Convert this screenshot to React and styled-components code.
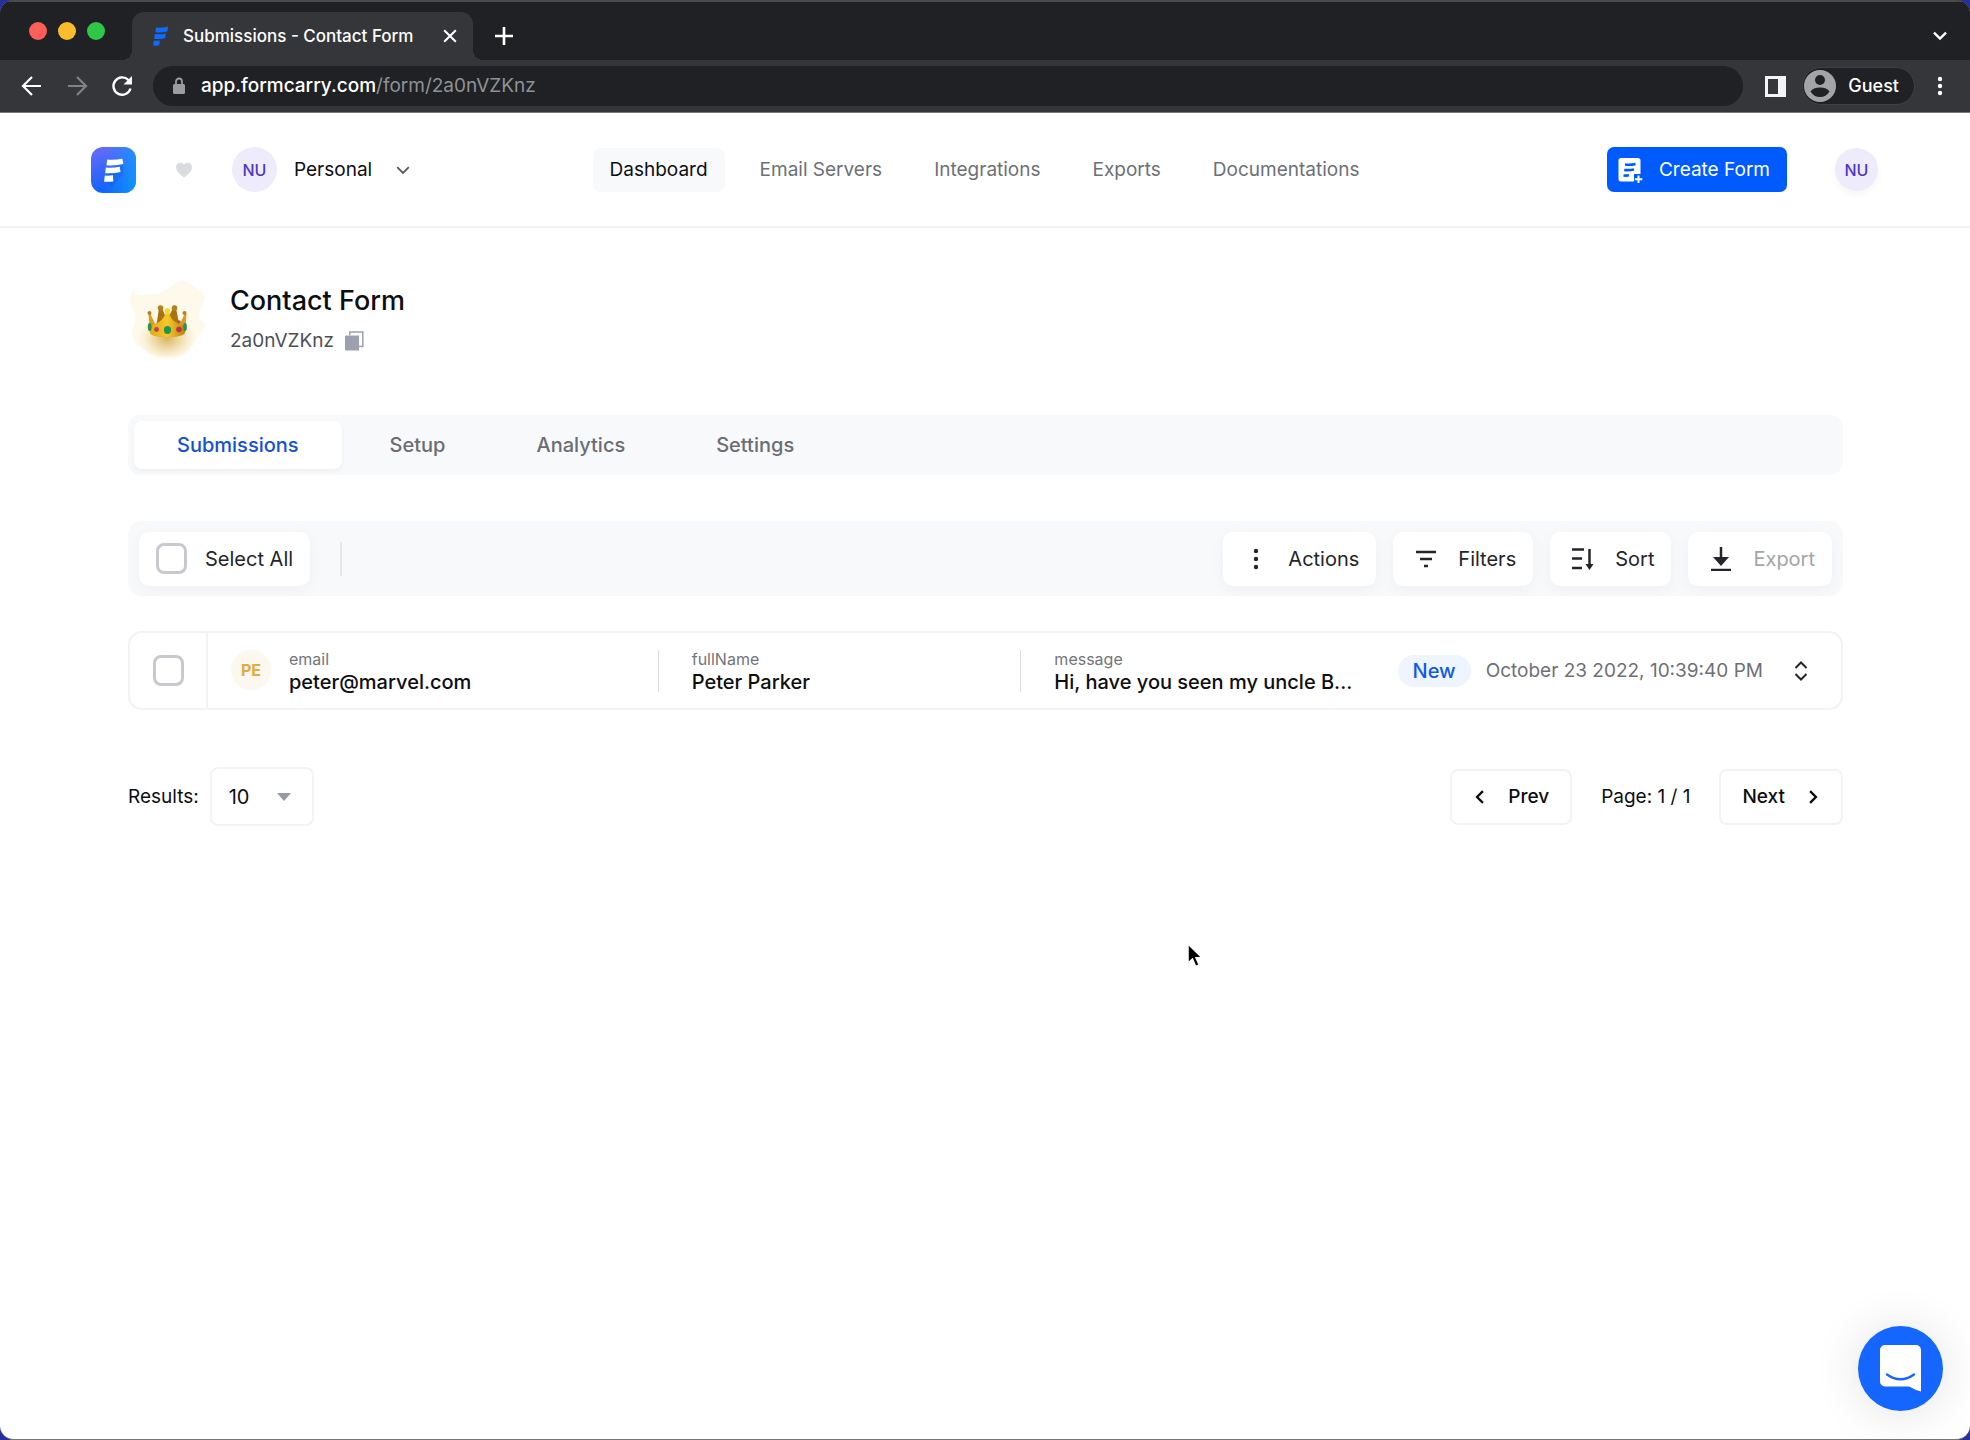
import React from 'react';
import styled, { createGlobalStyle, css } from 'styled-components';

const GlobalStyle = createGlobalStyle`
  * {
    box-sizing: border-box;
  }

  body {
    margin: 0;
    background: #27309a;
    color: #0d0e12;
    font-family: Inter, 'Liberation Sans', sans-serif;
    font-size: 19px;
    line-height: 24px;
  }

  button,
  select,
  input {
    font: inherit;
    color: inherit;
    margin: 0;
  }

  button {
    border: 0;
    padding: 0;
    background: none;
    cursor: pointer;
  }

  a {
    color: inherit;
    text-decoration: none;
  }

  svg {
    display: block;
    flex: none;
  }
`;

const Window = styled.div`
  min-height: 100vh;
  display: flex;
  flex-direction: column;
  overflow: hidden;
  background: #fff;
  border-bottom: 1px solid #777;
  border-radius: 14px;
`;

/* browser frame */

const Frame = styled.header`
  color: #fff;
  background: #35363a;
  border-bottom: 1px solid #77787b;
`;

const TabStrip = styled.div`
  display: flex;
  align-items: flex-end;
  height: 60px;
  padding: 0 22px 0 29px;
  background: #202124;
  border-top: 2px solid #4a4b4f;
`;

const Lights = styled.div`
  display: flex;
  gap: 11px;
  margin-right: 27px;
  padding-bottom: 20px;
`;

const Light = styled.span`
  width: 18px;
  height: 18px;
  border-radius: 50%;
  background: ${({ color }) => color};
`;

const BrowserTab = styled.div`
  position: relative;
  display: flex;
  align-items: center;
  width: 341px;
  height: 48px;
  padding: 0 16px 0 21px;
  background: #35363a;
  border-radius: 12px 12px 0 0;
  font-size: 17px;
  font-weight: 500;

  &::before,
  &::after {
    content: '';
    position: absolute;
    bottom: 0;
    width: 10px;
    height: 10px;
  }

  &::before {
    left: -10px;
    background: radial-gradient(circle at 0 0, transparent 10px, #35363a 10px);
  }

  &::after {
    right: -10px;
    background: radial-gradient(circle at 100% 0, transparent 10px, #35363a 10px);
  }

  span {
    flex: 1;
    margin-left: 14px;
    white-space: nowrap;
  }
`;

const StripButton = styled.button`
  display: flex;
  align-items: center;
  height: 48px;
  margin-left: ${({ $end }) => ($end ? 'auto' : '22px')};
`;

const AddressRow = styled.div`
  display: flex;
  align-items: center;
  height: 52px;
  padding: 0 20px;
`;

const FrameButton = styled.button`
  width: 24px;
  height: 24px;
  margin-right: 21px;
`;

const Address = styled.div`
  flex: 1;
  display: flex;
  align-items: center;
  height: 40px;
  margin: 0 22px 0 -2px;
  padding: 0 20px;
  gap: 16px;
  background: #202124;
  border-radius: 20px;
  color: #8f9296;

  b {
    font-weight: 500;
    color: #fff;
  }
`;

const Guest = styled.button`
  display: flex;
  align-items: center;
  height: 38px;
  margin: 0 15px 0 16px;
  padding: 0 15px 0 1px;
  gap: 12px;
  background: #202124;
  border: 1px solid #3f4044;
  border-radius: 19px;
  font-size: 18px;
  font-weight: 500;
`;

/* app header */

const Header = styled.header`
  display: grid;
  grid-template-columns: 1fr auto 1fr;
  align-items: center;
  height: 115px;
  padding: 0 92px 0 91px;
  border-bottom: 2px solid #f2f3f5;
`;

const HeaderSide = styled.div`
  display: flex;
  align-items: center;
  gap: ${({ $end }) => ($end ? '48px' : '40px')};
  justify-content: ${({ $end }) => ($end ? 'flex-end' : 'flex-start')};
`;

const Initials = styled.span`
  display: flex;
  align-items: center;
  justify-content: center;
  width: ${({ size }) => size}px;
  height: ${({ size }) => size}px;
  border-radius: 50%;
  background: ${({ $gold }) => ($gold ? '#fdf8ef' : '#eeebfb')};
  color: ${({ $gold }) => ($gold ? '#dfac41' : '#4d36c7')};
  font-size: 16px;
  font-weight: ${({ $gold }) => ($gold ? 700 : 500)};
`;

const Workspace = styled.button`
  display: flex;
  align-items: center;
  gap: 17px;

  svg {
    margin-left: 7px;
  }
`;

const Account = styled.button`
  border-radius: 50%;
  box-shadow: 0 4px 8px rgba(20, 20, 60, 0.04);
`;

const Nav = styled.nav`
  display: flex;
  gap: 18px;
`;

const NavLink = styled.a`
  padding: 10px 17px;
  border-radius: 8px;
  color: #6d7078;

  ${({ $active }) =>
    $active &&
    css`
      color: #0d0e12;
      background: #f8f9fb;
    `}
`;

const CreateButton = styled.button`
  display: flex;
  align-items: center;
  height: 45px;
  padding: 0 17px 0 11px;
  gap: 16px;
  border-radius: 7px;
  background: #005bff;
  color: #fff;
`;

/* form page */

const Main = styled.main`
  padding: 52px 127px 52px 128px;
`;

const FormHead = styled.section`
  display: flex;
  gap: 22px;
  margin-bottom: 55px;

  h1 {
    margin: 0 0 7px;
    font-size: 27px;
    font-weight: 500;
    line-height: 42px;
  }
`;

const FormId = styled.div`
  display: flex;
  align-items: center;
  gap: 11px;
  color: #4d4f56;
`;

const Tabs = styled.nav`
  display: flex;
  gap: 5px;
  margin-bottom: 46px;
  padding: 6px;
  background: #f8f9fb;
  border-radius: 12px;
  font-size: 20px;
  font-weight: 500;
`;

const Tab = styled.a`
  padding: 12px 43px;
  border-radius: 8px;
  color: #6b6d74;

  ${({ $active }) =>
    $active &&
    css`
      color: #1651d0;
      background: #fff;
      box-shadow: 0 2px 4px rgba(20, 20, 40, 0.05);
    `}
`;

const Toolbar = styled.div`
  display: flex;
  align-items: center;
  gap: 17px;
  height: 75px;
  margin-bottom: 35px;
  padding: 0 11px;
  background: #f8f9fb;
  border-radius: 14px;
  font-size: 20px;
`;

const raised = css`
  display: flex;
  align-items: center;
  height: 54px;
  background: #fff;
  border-radius: 10px;
  box-shadow: 0 4px 16px rgba(20, 20, 40, 0.04);
  color: #24252b;
`;

const SelectAll = styled.label`
  ${raised}
  gap: 18px;
  padding: 0 17px;
`;

const Divider = styled.span`
  width: 2px;
  height: 34px;
  margin: 0 auto 0 13px;
  background: #e6e7ea;
`;

const ToolButton = styled.button`
  ${raised}
  gap: 20px;
  padding: 0 17px 0 21px;

  &:disabled span {
    color: #a3a5aa;
  }
`;

const Checkbox = styled.input.attrs({ type: 'checkbox' })`
  appearance: none;
  width: 31px;
  height: 31px;
  border: 3px solid #c7c9ce;
  border-radius: 8px;
  background: #fff;

  &:checked {
    background: #005bff;
  }
`;

const Submission = styled.article`
  display: grid;
  grid-template-columns: 78px 31fr 25fr 26fr auto;
  align-items: center;
  height: 79px;
  margin-bottom: 57px;
  border: 2px solid #f2f3f4;
  border-radius: 14px;
`;

const CheckCell = styled.div`
  display: flex;
  align-items: center;
  justify-content: center;
  height: 100%;
  border-right: 2px solid #f2f3f4;
`;

const Field = styled.div`
  display: flex;
  align-items: center;
  gap: 18px;
  min-width: 0;
  height: 42px;
  padding-left: ${({ $first }) => ($first ? '23px' : '33px')};
  border-left: ${({ $first }) => ($first ? 'none' : '1px solid #dcdde0')};

  ${Initials} {
    align-self: flex-start;
  }

  dl {
    margin: 0;
    min-width: 0;
  }

  dt {
    font-size: 16px;
    line-height: 22px;
    color: #73757c;
  }

  dd {
    margin: 0;
    font-weight: 500;
    font-size: 20px;
    overflow: hidden;
    text-overflow: ellipsis;
    white-space: nowrap;
  }
`;

const Meta = styled.div`
  display: flex;
  align-items: center;
  gap: 15px;
  padding-right: 28px;
  color: #6d7078;
`;

const Badge = styled.span`
  padding: 4px 15px;
  border-radius: 16px;
  background: #eff5ff;
  color: #1159e8;
  font-size: 20px;
  font-weight: 500;
`;

const Expand = styled.button`
  margin-left: 11px;
`;

const Footer = styled.footer`
  display: flex;
  align-items: center;
  justify-content: space-between;
`;

const PageSize = styled.label`
  display: flex;
  align-items: center;
  gap: 11px;
`;

const SelectBox = styled.span`
  position: relative;

  svg {
    position: absolute;
    right: 23px;
    top: 26px;
    pointer-events: none;
  }
`;

const Select = styled.select`
  appearance: none;
  width: 104px;
  height: 59px;
  padding: 0 17px;
  border: 2px solid #f2f3f4;
  border-radius: 8px;
  background: #fff;
  font-size: 20px;
`;

const Pager = styled.div`
  display: flex;
  align-items: center;
  gap: 29px;
`;

const PageButton = styled.button`
  display: flex;
  align-items: center;
  height: 56px;
  padding: 0 21px;
  gap: 21px;
  border: 2px solid #f2f3f4;
  border-radius: 8px;
  font-weight: 500;
`;

const ChatButton = styled.button`
  position: fixed;
  right: 27px;
  bottom: 29px;
  display: flex;
  align-items: center;
  justify-content: center;
  width: 85px;
  height: 85px;
  border-radius: 50%;
  background: #1565ff;
  box-shadow: 0 2px 48px rgba(0, 0, 0, 0.12);
`;

const Pointer = styled.svg`
  position: absolute;
  left: 1186px;
  top: 942px;
`;

/* icons */

const Stroke = ({ size = 24, width = 2, children, ...rest }) => (
  <svg
    width={size}
    height={size}
    viewBox='0 0 24 24'
    fill='none'
    stroke='currentColor'
    strokeWidth={width}
    aria-hidden='true'
    {...rest}
  >
    {children}
  </svg>
);

const Favicon = () => (
  <svg width='16' height='20' viewBox='0 0 16 20' fill='#0f6cff' aria-hidden='true'>
    <path d='M3 1.500q6 .8 12-1L14.400 5.500q-6 1.500-12 .7z' />
    <path d='M1.800 8q5.500.8 11-.6L12.200 12.200q-5.500 1.200-11 .5z' />
    <path d='M.8 14.600q3 .5 6-.1L6.200 19.300q-3 .6-6 .1z' />
  </svg>
);

const Logo = () => (
  <svg width='45' height='46' viewBox='0 0 45 46' aria-hidden='true'>
    <defs>
      <linearGradient id='logo' x1='0' y1='0' x2='0.3' y2='1'>
        <stop offset='0' stopColor='#6d6cf8' />
        <stop offset='1' stopColor='#0b62fb' />
      </linearGradient>
      <linearGradient id='glow' x1='0.3' y1='0.5' x2='1' y2='0.6'>
        <stop offset='0' stopColor='#1c97ff' stopOpacity='0' />
        <stop offset='1' stopColor='#129bff' stopOpacity='0.85' />
      </linearGradient>
    </defs>
    <rect width='45' height='46' rx='12' fill='url(#logo)' />
    <rect width='45' height='46' rx='12' fill='url(#glow)' />
    <path d='M20 22L32 17l1 9-13 14-6-6z' fill='#0757d8' opacity='0.3' />
    <g fill='#fff'>
      <path d='M16.200 12.600q8 .6 15.200-.9l.9 5.300q-8.500 2-16.800 1.200z' />
      <path d='M14.800 20.500q7 .7 14-.8l.7 5.300q-7.600 1.800-15.300 1.200z' />
      <path d='M13.800 28.600q4 .3 8.200-.3l.3 6.200q-4.600.6-9.200.2z' />
    </g>
  </svg>
);

const Heart = () => (
  <svg width='16' height='16' viewBox='0 0 16 16' fill='#dadbe0' aria-hidden='true'>
    <path d='M8 15.500C5 13 0 9.500 0 5.300 0 2.500 1.900.8 4.200.8 5.900.8 7.300 1.700 8 3c.7-1.300 2.100-2.200 3.800-2.200C14.100.8 16 2.500 16 5.300 16 9.500 11 13 8 15.500z' />
  </svg>
);

const CreateIcon = () => (
  <svg width='25' height='26' viewBox='0 0 25 26' aria-hidden='true'>
    <path
      fill='#fff'
      d='M3 1h17a2.500 2.500 0 0 1 2.500 2.500V17H16v7.500H3A2.500 2.500 0 0 1 .5 22V3.500A2.500 2.500 0 0 1 3 1z'
    />
    <g fill='none' stroke='#005bff' strokeWidth='2.600'>
      <path d='M7 7.500q5.500.6 10.500-.6M6.200 13q5 .5 9.800-.5M5.500 18.500q3 .3 5.500-.3' />
    </g>
    <path d='M20.500 18.500v7.500M16.800 22.200h7.500' stroke='#fff' strokeWidth='2' />
  </svg>
);

const Crown = () => (
  <svg width='80' height='80' viewBox='0 0 80 80' aria-hidden='true'>
    <defs>
      <radialGradient id='crownShadow'>
        <stop offset='0' stopColor='#c79a2a' stopOpacity='0.75' />
        <stop offset='0.5' stopColor='#dcb75c' stopOpacity='0.4' />
        <stop offset='1' stopColor='#f4e3b0' stopOpacity='0' />
      </radialGradient>
      <linearGradient id='gold' x1='0' x2='1'>
        <stop offset='0' stopColor='#e0a815' />
        <stop offset='0.5' stopColor='#f6c82a' />
        <stop offset='1' stopColor='#b97b12' />
      </linearGradient>
    </defs>
    <path
      fill='#fff9ec'
      d='M7 15q9 0 22-1Q40 10 48 3q7-5 13 0l13 9q5 5 1 11l-4 9q-2 6 4 10 4 3 0 8-8 9-12 16-5 9-15 10H31q-9-1-15-7-12-6-12-17l3-12q2-6-4-13-3-12 4-16z'
    />
    <ellipse cx='39' cy='58' rx='30' ry='24' fill='url(#crownShadow)' />
    <path fill='#a9740f' d='M28 48l3-20h3l5 12 6-12h3l4 20z' />
    <path fill='#d99e1c' d='M22 52L20.500 34h2L27 44l8-4 4.500-10L44 40l8 4 4.500-10h2L57 52q-1 5-18 5t-17-5z' />
    <path fill='url(#gold)' d='M21 46q4 0 7-2 7-3 11.500-14Q43 41 50 44q4 2 8 2l-1 7q-3 4-17.500 4T22 53z' />
    <g fill='#b4811b'>
      <circle cx='32.500' cy='28' r='2.800' />
      <circle cx='46.500' cy='28' r='2.800' />
      <circle cx='21.500' cy='33' r='2' />
      <circle cx='56.500' cy='33' r='2' />
    </g>
    <circle cx='39.500' cy='31' r='2.800' fill='#f9d438' />
    <ellipse cx='39.500' cy='50' rx='3.600' ry='4' fill='#24934d' />
    <ellipse cx='21.700' cy='47' rx='1.900' ry='4' fill='#249457' />
    <ellipse cx='57' cy='47' rx='1.900' ry='4' fill='#249457' />
    <circle cx='28.500' cy='49.500' r='2.400' fill='#c33d52' />
    <circle cx='51' cy='49.500' r='2.800' fill='#b93348' />
    <circle cx='51' cy='42' r='1.800' fill='#b9572f' />
  </svg>
);

const CopyIcon = () => (
  <svg width='19' height='20' viewBox='0 0 19 20' aria-hidden='true'>
    <path fill='#9ba1b0' d='M1 4.500h13v15H1a1 1 0 0 1-1-1v-13a1 1 0 0 1 1-1z' />
    <path fill='none' stroke='#9ba1b0' strokeWidth='1.500' d='M4.800 4V1h13v14.500H14' />
  </svg>
);

const ChatIcon = () => (
  <svg width='41' height='47' viewBox='0 0 41 47' aria-hidden='true'>
    <path
      fill='#fff'
      d='M5 0h31a5 5 0 0 1 5 5v41.500q-6-1.500-12-5H5a5 5 0 0 1-5-5V5a5 5 0 0 1 5-5z'
    />
    <path
      d='M7 29.500q13.500 9.500 27 0'
      fill='none'
      stroke='#1565ff'
      strokeWidth='2.400'
      strokeLinecap='round'
    />
  </svg>
);

const dots = (
  <g fill='currentColor' stroke='none'>
    <circle cx='12' cy='4' r='2.200' />
    <circle cx='12' cy='12' r='2.200' />
    <circle cx='12' cy='20' r='2.200' />
  </g>
);

const navLinks = ['Dashboard', 'Email Servers', 'Integrations', 'Exports', 'Documentations'];

const tabs = ['Submissions', 'Setup', 'Analytics', 'Settings'];

const fields = [
  { name: 'email', value: 'peter@marvel.com' },
  { name: 'fullName', value: 'Peter Parker' },
  { name: 'message', value: 'Hi, have you seen my uncle B...' }
];

const tools = [
  { label: 'Actions', icon: dots },
  { label: 'Filters', icon: <path d='M2 5h20M6 12h12M10 19h4' /> },
  {
    label: 'Sort',
    icon: (
      <>
        <path d='M1 2.500h12M1 11.500h10M1 21h10M18.500 2v19' />
        <path d='M14.500 17h8l-4 6z' fill='currentColor' stroke='none' />
      </>
    )
  },
  {
    label: 'Export',
    disabled: true,
    icon: (
      <>
        <path d='M12 0v14M2 23h20' />
        <path d='M4 10h16l-8 9z' fill='currentColor' stroke='none' />
      </>
    )
  }
];

const BrowserFrame = () => (
  <Frame>
    <TabStrip>
      <Lights>
        <Light color='#fb5f57' />
        <Light color='#fabc2d' />
        <Light color='#30c748' />
      </Lights>
      <BrowserTab>
        <Favicon />
        <span>Submissions - Contact Form</span>
        <button aria-label='Close tab'>
          <Stroke size={14} width={3.5}>
            <path d='M2 2l20 20M22 2L2 22' />
          </Stroke>
        </button>
      </BrowserTab>
      <StripButton aria-label='New tab'>
        <Stroke size={18} width={3.5}>
          <path d='M12 0v24M0 12h24' />
        </Stroke>
      </StripButton>
      <StripButton $end aria-label='Search tabs'>
        <Stroke size={16} width={3.5}>
          <path d='M3 7l9 9 9-9' />
        </Stroke>
      </StripButton>
    </TabStrip>
    <AddressRow>
      <FrameButton aria-label='Back'>
        <Stroke width={2.2}>
          <path d='M21 12H3M12 3l-9 9 9 9' />
        </Stroke>
      </FrameButton>
      <FrameButton aria-label='Forward'>
        <Stroke width={2.2} color='#808286'>
          <path d='M3 12h18M12 3l9 9-9 9' />
        </Stroke>
      </FrameButton>
      <FrameButton aria-label='Reload'>
        <Stroke width={2.4}>
          <path d='M20.500 14.500A8.700 8.700 0 1 1 18.400 6l2 2.200' />
          <path d='M22 2v8.500h-8.500z' fill='currentColor' stroke='none' />
        </Stroke>
      </FrameButton>
      <Address>
        <svg width='12' height='18' viewBox='0 0 12 18' aria-hidden='true'>
          <rect y='7' width='12' height='10' rx='1.500' fill='#9a9ca0' />
          <path d='M3 8V4.500a3 3 0 0 1 6 0V8' fill='none' stroke='#9a9ca0' strokeWidth='1.800' />
        </svg>
        <span>
          <b>app.formcarry.com</b>/form/2a0nVZKnz
        </span>
      </Address>
      <button aria-label='Side panel'>
        <svg width='21' height='21' viewBox='0 0 21 21'>
          <path fill='#f4f4f8' fillRule='evenodd' d='M0 0h21v21H0zM3 3v15h10V3z' />
        </svg>
      </button>
      <Guest>
        <svg width='32' height='32' viewBox='0 0 32 32' aria-hidden='true'>
          <circle cx='16' cy='16' r='16' fill='#a3a4a8' />
          <circle cx='16' cy='10' r='5' fill='#202124' />
          <path d='M6.500 21.500Q9 17.500 16 17.500t9.500 4Q22 27 16 27t-9.500-5.500z' fill='#202124' />
        </svg>
        Guest
      </Guest>
      <button aria-label='Menu'>
        <Stroke size={20} viewBox='2 2 20 20'>
          <g fill='currentColor' stroke='none'>
            <circle cx='12' cy='5' r='2.200' />
            <circle cx='12' cy='12' r='2.200' />
            <circle cx='12' cy='19' r='2.200' />
          </g>
        </Stroke>
      </button>
    </AddressRow>
  </Frame>
);

const AppHeader = () => (
  <Header>
    <HeaderSide>
      <a href='#home' aria-label='Home'>
        <Logo />
      </a>
      <Heart />
      <Workspace>
        <Initials size={45}>NU</Initials>
        Personal
        <Stroke size={14} width={3} color='#55575d'>
          <path d='M2 7l10 10L22 7' />
        </Stroke>
      </Workspace>
    </HeaderSide>
    <Nav>
      {navLinks.map((link, i) => (
        <NavLink key={link} href={`#${link}`} $active={i === 0}>
          {link}
        </NavLink>
      ))}
    </Nav>
    <HeaderSide $end>
      <CreateButton>
        <CreateIcon />
        Create Form
      </CreateButton>
      <Account aria-label='Account'>
        <Initials size={43}>NU</Initials>
      </Account>
    </HeaderSide>
  </Header>
);

const App = () => {
  return (
    <>
      <GlobalStyle />
      <Window>
        <BrowserFrame />
        <AppHeader />
        <Main>
          <FormHead>
            <Crown />
            <div>
              <h1>Contact Form</h1>
              <FormId>
                2a0nVZKnz
                <button aria-label='Copy form id'>
                  <CopyIcon />
                </button>
              </FormId>
            </div>
          </FormHead>
          <Tabs>
            {tabs.map((tab, i) => (
              <Tab key={tab} href={`#${tab}`} $active={i === 0}>
                {tab}
              </Tab>
            ))}
          </Tabs>
          <Toolbar>
            <SelectAll>
              <Checkbox />
              Select All
            </SelectAll>
            <Divider />
            {tools.map(({ label, icon, disabled }) => (
              <ToolButton key={label} disabled={disabled}>
                <Stroke width={2.5}>{icon}</Stroke>
                <span>{label}</span>
              </ToolButton>
            ))}
          </Toolbar>
          <Submission>
            <CheckCell>
              <Checkbox aria-label='Select submission' />
            </CheckCell>
            {fields.map(({ name, value }, i) => (
              <Field key={name} $first={i === 0}>
                {i === 0 && (
                  <Initials size={40} $gold>
                    PE
                  </Initials>
                )}
                <dl>
                  <dt>{name}</dt>
                  <dd>{value}</dd>
                </dl>
              </Field>
            ))}
            <Meta>
              <Badge>New</Badge>
              <time dateTime='2022-10-23T22:39:40'>October 23 2022, 10:39:40 PM</time>
              <Expand aria-label='Expand submission'>
                <Stroke color='#24252b'>
                  <path d='M6.500 9L12 3.500 17.500 9M6.500 15l5.500 5.500 5.500-5.500' />
                </Stroke>
              </Expand>
            </Meta>
          </Submission>
          <Footer>
            <PageSize>
              Results:
              <SelectBox>
                <Select defaultValue='10'>
                  <option>10</option>
                  <option>25</option>
                  <option>50</option>
                </Select>
                <svg width='14' height='8' viewBox='0 0 14 8' aria-hidden='true'>
                  <path d='M0 0h14L7 8z' fill='#959aa3' />
                </svg>
              </SelectBox>
            </PageSize>
            <Pager>
              <PageButton>
                <Stroke size={14} width={4}>
                  <path d='M17 2L7 12l10 10' />
                </Stroke>
                Prev
              </PageButton>
              <span>Page: 1 / 1</span>
              <PageButton>
                Next
                <Stroke size={14} width={4}>
                  <path d='M7 2l10 10L7 22' />
                </Stroke>
              </PageButton>
            </Pager>
          </Footer>
        </Main>
      </Window>
      <ChatButton aria-label='Open chat'>
        <ChatIcon />
      </ChatButton>
      <Pointer width='18' height='28' viewBox='0 0 18 28' aria-hidden='true'>
        <path
          d='M2 2v19l4.500-4 3.200 7.500 3.500-1.500L10 15.800h6z'
          fill='#000'
          stroke='#fff'
          strokeWidth='1.500'
        />
      </Pointer>
    </>
  );
};

export default App;
